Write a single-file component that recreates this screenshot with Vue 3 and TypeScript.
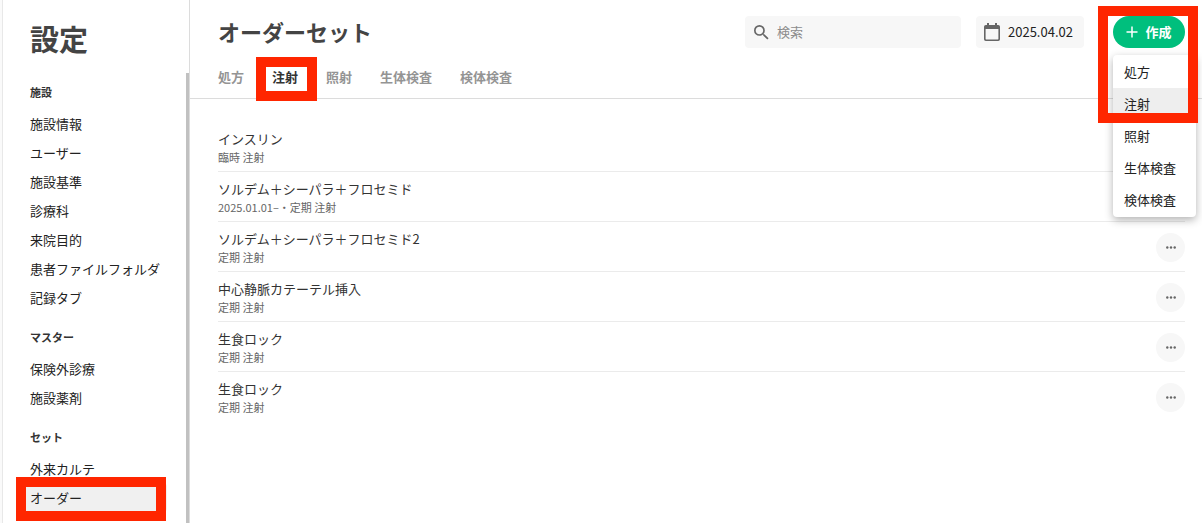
<script setup lang="ts">
import { ref } from 'vue'

interface NavSection {
  title: string
  items: string[]
}

interface OrderSet {
  id: number
  name: string
  detail: string
}

const sections: NavSection[] = [
  {
    title: '施設',
    items: ['施設情報', 'ユーザー', '施設基準', '診療科', '来院目的', '患者ファイルフォルダ', '記録タブ'],
  },
  { title: 'マスター', items: ['保険外診療', '施設薬剤'] },
  { title: 'セット', items: ['外来カルテ', 'オーダー'] },
]

const kinds: string[] = ['処方', '注射', '照射', '生体検査', '検体検査']

const orderSets: OrderSet[] = [
  { id: 1, name: 'インスリン', detail: '臨時 注射' },
  { id: 2, name: 'ソルデム＋シーパラ＋フロセミド', detail: '2025.01.01–・定期 注射' },
  { id: 3, name: 'ソルデム＋シーパラ＋フロセミド2', detail: '定期 注射' },
  { id: 4, name: '中心静脈カテーテル挿入', detail: '定期 注射' },
  { id: 5, name: '生食ロック', detail: '定期 注射' },
  { id: 6, name: '生食ロック', detail: '定期 注射' },
]

const activeItem = ref('オーダー')
const activeKind = ref('注射')
const query = ref('')
</script>

<template>
  <div class="app">
    <aside class="sidebar">
      <h1 class="sidebar-title">設定</h1>
      <nav class="nav">
        <section v-for="section in sections" :key="section.title" class="nav-section">
          <h2 class="nav-heading">{{ section.title }}</h2>
          <ul class="nav-list">
            <li v-for="item in section.items" :key="item">
              <a href="#" class="nav-link" :class="{ active: item === activeItem }" @click.prevent="activeItem = item">
                {{ item }}
                <span v-if="item === activeItem" class="marker marker-nav"></span>
              </a>
            </li>
          </ul>
        </section>
      </nav>
      <div class="scroll-thumb"></div>
    </aside>

    <main class="main">
      <header class="header">
        <div class="toolbar">
          <h2 class="page-title">オーダーセット</h2>
          <label class="search">
            <svg class="search-icon" viewBox="3 3 18 18" aria-hidden="true">
              <path
                d="M15.5 14h-.79l-.28-.27A6.47 6.47 0 0 0 16 9.5 6.5 6.5 0 1 0 9.5 16c1.61 0 3.09-.59 4.23-1.57l.27.28v.79l5 4.99L20.49 19l-4.99-5zm-6 0C7.01 14 5 11.99 5 9.5S7.01 5 9.5 5 14 7.01 14 9.5 11.99 14 9.5 14z"
              />
            </svg>
            <input v-model="query" class="search-input" type="text" placeholder="検索" aria-label="検索" />
          </label>
          <button type="button" class="date">
            <svg class="date-icon" viewBox="0 0 16 18" aria-hidden="true">
              <path
                d="M3 0h2v2h6V0h2v2h1.2A1.8 1.8 0 0 1 16 3.800V16.200A1.800 1.800 0 0 1 14.200 18H1.800A1.800 1.800 0 0 1 0 16.200V3.800A1.800 1.800 0 0 1 1.800 2H3zM1.600 6v9.800a.6.6 0 0 0 .6.6h11.600a.6.6 0 0 0 .6-.6V6z"
              />
            </svg>
            <span>2025.04.02</span>
          </button>
          <div class="create">
            <button type="button" class="create-button">
              <svg class="plus-icon" viewBox="0 0 12 12" aria-hidden="true">
                <path d="M6 0.500v11M0.500 6h11" />
              </svg>
              <span>作成</span>
            </button>
            <ul class="menu">
              <li v-for="kind in kinds" :key="kind">
                <button type="button" class="menu-item" :class="{ active: kind === activeKind }">{{ kind }}</button>
              </li>
            </ul>
            <span class="marker marker-create"></span>
          </div>
        </div>
        <nav class="tabs">
          <button
            v-for="kind in kinds"
            :key="kind"
            type="button"
            class="tab"
            :class="{ active: kind === activeKind }"
            @click="activeKind = kind"
          >
            {{ kind }}
            <span v-if="kind === activeKind" class="marker marker-tab"></span>
          </button>
        </nav>
      </header>

      <ul class="list">
        <li v-for="set in orderSets" :key="set.id" class="row">
          <div class="row-text">
            <p class="row-name">{{ set.name }}</p>
            <p class="row-detail">{{ set.detail }}</p>
          </div>
          <button type="button" class="more" :aria-label="set.name + 'のメニュー'">
            <svg class="more-icon" viewBox="0 0 10 3" aria-hidden="true">
              <circle cx="1.300" cy="1.500" r="1.200" />
              <circle cx="5" cy="1.500" r="1.200" />
              <circle cx="8.700" cy="1.500" r="1.200" />
            </svg>
          </button>
        </li>
      </ul>
    </main>
  </div>
</template>

<style>
html,
body {
  background: #fff;
}
</style>

<style scoped>
.app {
  display: flex;
  height: 100vh;
  overflow: hidden;
  box-sizing: border-box;
  border-left: 2px solid #fafafa;
  background: #fff;
  color: #222;
  font-family: 'Noto Sans CJK JP', sans-serif;
  font-size: 13px;
  line-height: 20px;
}

.app * {
  box-sizing: border-box;
}

h1,
h2,
p,
ul {
  margin: 0;
  padding: 0;
}

ul {
  list-style: none;
}

button {
  margin: 0;
  padding: 0;
  border: 0;
  background: none;
  color: inherit;
  font: inherit;
  cursor: pointer;
}

.sidebar {
  position: relative;
  flex: 0 0 188px;
  padding: 15px 22px 0 14px;
  border-left: 1px solid #e8e8e8;
  border-right: 1px solid #dcdcdc;
}

.sidebar-title {
  padding-left: 13px;
  color: #444;
  font-size: 29px;
  line-height: 46px;
  font-weight: 700;
}

.nav {
  display: flex;
  flex-direction: column;
  gap: 14px;
  margin-top: 20px;
}

.nav-heading {
  margin-bottom: 5px;
  padding-left: 13px;
  color: #333;
  font-size: 11px;
  line-height: 23px;
  font-weight: 700;
}

.nav-link {
  position: relative;
  display: block;
  padding-left: 13px;
  border-radius: 4px;
  color: #222;
  line-height: 29px;
  text-decoration: none;
  white-space: nowrap;
}

.nav-link.active {
  background: #f0f0f0;
}

.scroll-thumb {
  position: absolute;
  top: 73px;
  right: 0;
  bottom: 0;
  width: 3px;
  background: #c1c1c1;
}

.marker {
  position: absolute;
  border: 10px solid #ff2600;
  pointer-events: none;
}

.marker-nav {
  inset: -6px 1px -9px -1px;
}

.marker-tab {
  inset: -10px -19px -14px -16px;
}

.marker-create {
  top: -10px;
  left: -15px;
  right: -13px;
  height: 117px;
  z-index: 3;
}

.main {
  flex: 1;
  min-width: 0;
}

.header {
  padding: 16px 17px 11px 28px;
  border-bottom: 1px solid #dcdcdc;
}

.toolbar {
  display: flex;
  align-items: flex-start;
}

.page-title {
  flex: 1;
  color: #444;
  font-size: 22px;
  line-height: 30px;
  font-weight: 700;
}

.search {
  display: flex;
  align-items: center;
  gap: 8px;
  width: 216px;
  height: 32px;
  padding: 0 9px;
  border-radius: 4px;
  background: #f7f7f7;
}

.search-icon {
  flex: none;
  width: 15px;
  height: 15px;
  fill: #666;
}

.search-input {
  flex: 1;
  min-width: 0;
  padding: 0;
  border: 0;
  outline: 0;
  background: none;
  color: #222;
  font: inherit;
}

.search-input::placeholder {
  color: #8c8c8c;
  opacity: 1;
}

.date {
  display: flex;
  align-items: center;
  gap: 8px;
  width: 108px;
  height: 32px;
  margin: 0 29px 0 15px;
  padding: 0 8px;
  border-radius: 4px;
  background: #f7f7f7;
}

.date-icon {
  flex: none;
  width: 16px;
  height: 18px;
  fill: #666;
}

.create {
  position: relative;
  width: 72px;
}

.create-button {
  display: flex;
  align-items: center;
  justify-content: center;
  gap: 7px;
  width: 100%;
  height: 32px;
  border-radius: 16px;
  background: #00bf7d;
  color: #fff;
  font-weight: 700;
}

.plus-icon {
  width: 12px;
  height: 12px;
  fill: none;
  stroke: #fff;
  stroke-width: 1.5;
}

.menu {
  position: absolute;
  top: 39px;
  left: 0;
  z-index: 2;
  width: 83px;
  padding: 1px 0;
  border-radius: 4px;
  background: #fff;
  box-shadow: 0 3px 8px rgba(0, 0, 0, 0.3);
}

.menu-item {
  display: block;
  width: 100%;
  padding-left: 11px;
  line-height: 32px;
  text-align: left;
  white-space: nowrap;
}

.menu-item.active {
  background: #eee;
}

.tabs {
  display: flex;
  gap: 28px;
  margin-top: 19px;
}

.tab {
  position: relative;
  color: #949494;
  font-weight: 700;
}

.tab.active {
  color: #333;
}

.list {
  padding: 23px 17px 0 28px;
}

.row {
  display: flex;
  align-items: center;
  justify-content: space-between;
  height: 50px;
  padding-top: 2px;
  border-bottom: 1px solid #ebebeb;
}

.row:last-child {
  border-bottom-color: transparent;
}

.row-name {
  color: #333;
}

.row-detail {
  color: #666;
  font-size: 11px;
  line-height: 17px;
}

.more {
  display: flex;
  align-items: center;
  justify-content: center;
  width: 29px;
  height: 29px;
  border-radius: 50%;
  background: #f7f7f7;
}

.more-icon {
  width: 10px;
  height: 3px;
  fill: #666;
}
</style>
